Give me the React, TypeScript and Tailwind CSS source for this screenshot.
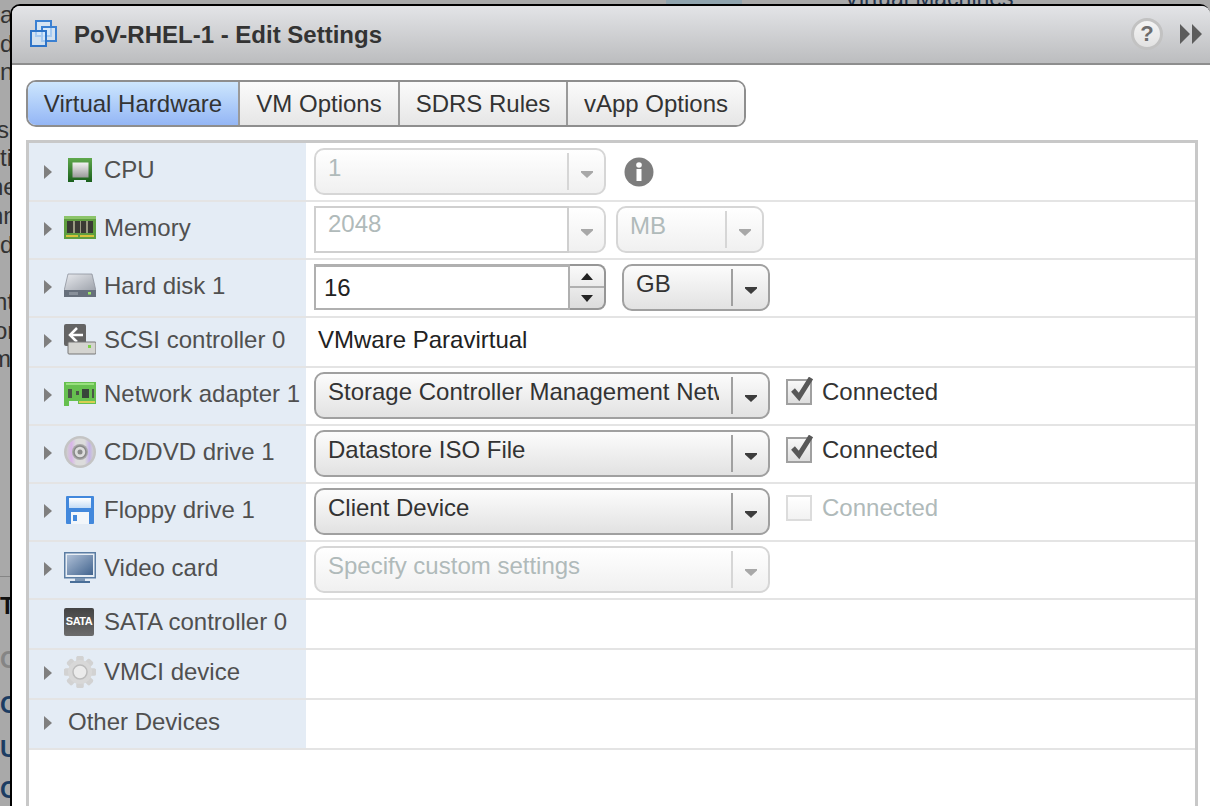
import { ReactNode } from 'react';

const font = { fontFamily: '"Liberation Sans", Arial, sans-serif' };

function Arrow({ disabled }: { disabled?: boolean }) {
  return (
    <svg width="12" height="7" viewBox="0 0 12 7" className="block">
      <path d="M0 0h12v1.5L6 7 0 1.5z" fill={disabled ? '#a8a8a8' : '#3c3c3c'} />
    </svg>
  );
}

function Combo({
  w,
  text,
  disabled,
  btn = 37,
  clip,
}: {
  w: string;
  text: string;
  disabled?: boolean;
  btn?: number;
  clip?: boolean;
}) {
  return (
    <div
      className={`${w} h-[47px] flex shrink-0 rounded-[10px] border-2 bg-gradient-to-b ${
        disabled
          ? 'border-[#d6d6d6] from-[#ffffff] to-[#f0f0f0] text-[#b0baba]'
          : 'border-[#a0a0a0] from-[#fcfcfc] to-[#e2e2e2] text-[#333333]'
      }`}
    >
      <div className="flex-1 min-w-0 pl-[12px] pb-[8px] flex items-center overflow-hidden whitespace-nowrap">
        <span className={clip ? 'block w-[391px] overflow-hidden' : ''}>{text}</span>
      </div>
      <div className="my-[3px] flex items-center justify-center pt-[6px] border-l-2 shrink-0 border-inherit" style={{ width: btn }}>
        <Arrow disabled={disabled} />
      </div>
    </div>
  );
}

function Check({ checked, disabled }: { checked?: boolean; disabled?: boolean }) {
  return (
    <div className="relative ml-4 mt-[6px] flex items-center gap-[10px]">
      <div
        className={`w-[26px] h-[26px] border-2 bg-gradient-to-b ${
          disabled ? 'border-[#dcdcdc] from-[#ffffff] to-[#f2f2f2]' : 'border-[#a0a0a0] from-[#f8f8f8] to-[#dedede]'
        }`}
      />
      {checked && (
        <svg width="28" height="28" viewBox="0 0 28 28" className="absolute left-[1px] -top-[1px]">
          <path d="M6 13l6 7L24 1" fill="none" stroke="#585858" strokeWidth="5" />
        </svg>
      )}
      <span className={disabled ? 'text-[#b0baba]' : 'text-[#333333]'}>Connected</span>
    </div>
  );
}

function CpuIcon() {
  return (
    <svg width="32" height="32" viewBox="0 0 32 32">
      <defs>
        <linearGradient id="cpuG" x1="0" y1="0" x2="0" y2="1">
          <stop offset="0" stopColor="#5fa84c" />
          <stop offset="1" stopColor="#1a5f1c" />
        </linearGradient>
        <linearGradient id="cpuC" x1="0" y1="0" x2="0" y2="1">
          <stop offset="0" stopColor="#f2f2f2" />
          <stop offset="1" stopColor="#9a9a9a" />
        </linearGradient>
      </defs>
      <path d="M4 4h24v24h-6v-2H10v2H4z" fill="url(#cpuG)" />
      <rect x="8.5" y="8.5" width="16" height="15" fill="url(#cpuC)" />
    </svg>
  );
}

function MemoryIcon() {
  return (
    <svg width="32" height="32" viewBox="0 0 32 32">
      <rect x="0" y="4" width="32" height="23" fill="#5f9e3f" />
      <rect x="0" y="4" width="32" height="3" fill="#8cc46a" />
      <rect x="3" y="9" width="26" height="12" fill="#3a3a34" />
      <path d="M9 9h2v12H9zM16 9h1v12h-1zM22 9h2v12h-2z" fill="#9a9a82" />
      <rect x="2" y="23" width="12" height="2" fill="#d8c23a" />
      <rect x="16" y="23" width="14" height="2" fill="#d8c23a" />
    </svg>
  );
}

function DiskIcon() {
  return (
    <svg width="32" height="32" viewBox="0 0 32 32">
      <defs>
        <linearGradient id="diskG" x1="0" y1="0" x2="1" y2="1">
          <stop offset="0" stopColor="#e8eaee" />
          <stop offset="1" stopColor="#9ca1aa" />
        </linearGradient>
      </defs>
      <path d="M4 4h24l4 17H0z" fill="url(#diskG)" stroke="#8a8f98" strokeWidth="0.75" />
      <rect x="0" y="20" width="32" height="7" fill="#67707c" />
      <rect x="5" y="22" width="9" height="3" fill="#88909a" />
      <rect x="24" y="22" width="3" height="2.5" fill="#9be36a" />
    </svg>
  );
}

function ScsiIcon() {
  return (
    <svg width="32" height="32" viewBox="0 0 32 32">
      <rect x="0" y="0" width="22" height="22" rx="2" fill="#646464" />
      <path d="M13 4l-7 7 7 7" fill="none" stroke="#ffffff" strokeWidth="2.5" />
      <path d="M8 11h11" stroke="#ffffff" strokeWidth="2.5" />
      <rect x="4" y="18" width="28" height="12" rx="1" fill="#d4d4d0" stroke="#777777" />
      <rect x="24" y="21" width="3" height="3" fill="#7ed04a" />
    </svg>
  );
}

function NetIcon() {
  return (
    <svg width="32" height="32" viewBox="0 0 32 32">
      <path d="M0 4h32v22H14v-3H5v5H0z" fill="#66c04f" />
      <rect x="2" y="5" width="28" height="2" fill="#98e07e" />
      <rect x="4" y="11" width="4" height="9" fill="#4a5747" />
      <rect x="12" y="13" width="3" height="4" fill="#4a5747" />
      <rect x="18" y="11" width="7" height="9" fill="#38453a" />
      <rect x="28" y="11" width="2" height="9" fill="#4a5747" />
      <rect x="15" y="23" width="16" height="2" fill="#d8cf52" />
    </svg>
  );
}

function DiscIcon() {
  return (
    <svg width="32" height="32" viewBox="0 0 32 32">
      <defs>
        <linearGradient id="discG" x1="0" y1="0" x2="1" y2="0">
          <stop offset="0" stopColor="#cfcfcf" />
          <stop offset="0.18" stopColor="#d8b4e8" />
          <stop offset="0.35" stopColor="#dcdcdc" />
          <stop offset="0.68" stopColor="#dcdcdc" />
          <stop offset="0.85" stopColor="#c4b4e8" />
          <stop offset="1" stopColor="#cfcfcf" />
        </linearGradient>
      </defs>
      <circle cx="16" cy="16" r="16" fill="#c4c4c4" />
      <circle cx="16" cy="16" r="13.5" fill="url(#discG)" />
      <circle cx="16" cy="16" r="8" fill="#a8a8a8" />
      <circle cx="16" cy="16" r="6" fill="#dcdcdc" stroke="#8a8a8a" strokeWidth="1.5" />
      <circle cx="16" cy="16" r="2.5" fill="#8a8a8a" />
    </svg>
  );
}

function FloppyIcon() {
  return (
    <svg width="32" height="32" viewBox="0 0 32 32">
      <defs>
        <linearGradient id="flopL" x1="0" y1="0" x2="0" y2="1">
          <stop offset="0" stopColor="#ffffff" />
          <stop offset="1" stopColor="#c4dcf6" />
        </linearGradient>
      </defs>
      <rect x="2" y="2" width="28" height="28" rx="1" fill="#4288dc" />
      <rect x="5" y="4" width="22" height="10" fill="url(#flopL)" />
      <rect x="7" y="18" width="18" height="12" fill="#f2f6fa" />
      <rect x="9" y="21" width="4" height="6" fill="#4288dc" />
    </svg>
  );
}

function MonitorIcon() {
  return (
    <svg width="32" height="32" viewBox="0 0 32 32">
      <defs>
        <linearGradient id="monG" x1="0" y1="0" x2="1" y2="1">
          <stop offset="0" stopColor="#aebfd6" />
          <stop offset="1" stopColor="#42648e" />
        </linearGradient>
      </defs>
      <rect x="0.75" y="0.75" width="30.5" height="25" fill="#e8eef4" stroke="#5b7da3" strokeWidth="1.5" />
      <rect x="3" y="3" width="26" height="20" fill="url(#monG)" />
      <rect x="11" y="26" width="10" height="3" fill="#7d97b5" />
      <rect x="6" y="29" width="20" height="2" fill="#4a6f98" />
    </svg>
  );
}

function SataIcon() {
  return (
    <div className="w-[30px] h-[28px] bg-gradient-to-b from-[#444444] to-[#6c6c6c] rounded-[2px] flex items-center justify-center text-white font-bold text-[11px] leading-none tracking-[-0.5px] mr-[2px]">
      SATA
    </div>
  );
}

function GearIcon() {
  const teeth = [0, 45, 90, 135, 180, 225, 270, 315];
  return (
    <svg width="32" height="32" viewBox="0 0 32 32">
      {teeth.map((a) => (
        <rect key={a} x="12.5" y="0" width="7" height="32" rx="1.5" fill="#d2d2d2" transform={`rotate(${a} 16 16)`} />
      ))}
      <circle cx="16" cy="16" r="12" fill="#d8d8d8" />
      <circle cx="16" cy="16" r="7" fill="#ebebeb" stroke="#bcbcbc" strokeWidth="1.5" />
    </svg>
  );
}

interface RowDef {
  label: string;
  icon?: ReactNode;
  h: string;
  expand?: boolean;
  first?: boolean;
  right?: ReactNode;
}

const rows: RowDef[] = [
  {
    label: 'CPU',
    icon: <CpuIcon />,
    h: 'h-[59px]',
    expand: true,
    first: true,
    right: (
      <>
        <Combo w="w-[292px]" text="1" disabled />
        <svg width="30" height="30" viewBox="0 0 30 30" className="ml-[18px] mt-[9px]">
          <circle cx="15" cy="15" r="14.5" fill="#7d7d7d" />
          <rect x="12.5" y="12" width="5" height="12" fill="#ffffff" />
          <circle cx="15" cy="8" r="2.8" fill="#ffffff" />
        </svg>
      </>
    ),
  },
  {
    label: 'Memory',
    icon: <MemoryIcon />,
    h: 'h-[58px]',
    expand: true,
    right: (
      <>
        <div className="w-[292px] h-[47px] flex shrink-0">
          <div className="flex-1 bg-white border-2 border-[#cfcfcf] pl-[12px] pb-[12px] text-[#b0baba] flex items-center">2048</div>
          <div className="w-[37px] flex items-center justify-center pt-[6px] border-2 border-l-0 border-[#d6d6d6] rounded-r-[10px] bg-gradient-to-b from-[#ffffff] to-[#f0f0f0]">
            <Arrow disabled />
          </div>
        </div>
        <div className="ml-[10px]">
          <Combo w="w-[148px]" text="MB" disabled />
        </div>
      </>
    ),
  },
  {
    label: 'Hard disk 1',
    icon: <DiskIcon />,
    h: 'h-[58px]',
    expand: true,
    right: (
      <>
        <div className="w-[292px] h-[46px] flex shrink-0">
          <div className="flex-1 bg-white border-2 border-t-[3px] border-[#b0b0b0] pl-[8px] pt-[1px] text-[#222222] flex items-center">16</div>
          <div className="w-[36px] flex flex-col border-2 border-l-0 border-[#969696] rounded-r-[8px] bg-gradient-to-b from-[#fafafa] to-[#dcdcdc]">
            <div className="flex-1 flex items-center justify-center border-b-2 border-[#b0b0b0]">
              <svg width="12" height="7" viewBox="0 0 12 7">
                <path d="M6 0l6 7H0z" fill="#222222" />
              </svg>
            </div>
            <div className="flex-1 flex items-center justify-center">
              <svg width="12" height="7" viewBox="0 0 12 7">
                <path d="M0 0h12L6 7z" fill="#222222" />
              </svg>
            </div>
          </div>
        </div>
        <div className="ml-[16px]">
          <Combo w="w-[148px]" text="GB" />
        </div>
      </>
    ),
  },
  {
    label: 'SCSI controller 0',
    icon: <ScsiIcon />,
    h: 'h-[50px]',
    expand: true,
    right: <span className="ml-1 mt-[4px] text-[#222222]">VMware Paravirtual</span>,
  },
  {
    label: 'Network adapter 1',
    icon: <NetIcon />,
    h: 'h-[58px]',
    expand: true,
    right: (
      <>
        <Combo w="w-[456px]" text="Storage Controller Management Network" clip />
        <Check checked />
      </>
    ),
  },
  {
    label: 'CD/DVD drive 1',
    icon: <DiscIcon />,
    h: 'h-[58px]',
    expand: true,
    right: (
      <>
        <Combo w="w-[456px]" text="Datastore ISO File" />
        <Check checked />
      </>
    ),
  },
  {
    label: 'Floppy drive 1',
    icon: <FloppyIcon />,
    h: 'h-[58px]',
    expand: true,
    right: (
      <>
        <Combo w="w-[456px]" text="Client Device" />
        <Check disabled />
      </>
    ),
  },
  {
    label: 'Video card',
    icon: <MonitorIcon />,
    h: 'h-[58px]',
    expand: true,
    right: <Combo w="w-[456px]" text="Specify custom settings" disabled />,
  },
  { label: 'SATA controller 0', icon: <SataIcon />, h: 'h-[50px]' },
  { label: 'VMCI device', icon: <GearIcon />, h: 'h-[50px]', expand: true },
  { label: 'Other Devices', h: 'h-[50px]', expand: true },
];

const tabs = ['Virtual Hardware', 'VM Options', 'SDRS Rules', 'vApp Options'];
const tabWidths = ['w-[210px]', 'w-[160px]', 'w-[168px]', 'w-[178px]'];

// bits of the page behind the dialog, only a 10px strip of it shows
const behind = [
  { t: 'a', c: '' },
  { t: 'd', c: '' },
  { t: 'n', c: '' },
  { t: '', c: '' },
  { t: 'se', c: '-ml-[3px]' },
  { t: 'ti', c: '' },
  { t: 'ne', c: '-ml-[10px]' },
  { t: 'hn', c: '-ml-[10px]' },
  { t: 'd', c: '' },
  { t: '', c: '' },
  { t: 'nt', c: '-ml-[6px]' },
  { t: 'or', c: '-ml-[6px]' },
  { t: 'm', c: '-ml-[9px]' },
];

function Backdrop() {
  return (
    <div className="absolute inset-0 overflow-hidden">
      <div className="absolute left-0 top-[1px] w-[10px] overflow-hidden text-[#333333] text-[24px] leading-[28.7px] whitespace-nowrap">
        {behind.map((l, i) => (
          <div key={i} className={`h-[28.7px] ${l.c}`}>
            {l.t}
          </div>
        ))}
      </div>
      <div className="absolute left-0 top-[576px] w-[10px] h-[1px] bg-[#858585]" />
      <div className="absolute left-0 top-[592px] w-[10px] overflow-hidden font-bold text-[24px] leading-7 text-[#111111]">T</div>
      <div className="absolute left-0 top-[646px] w-[10px] overflow-hidden font-bold text-[24px] leading-7 text-[#858585]">C</div>
      <div className="absolute left-0 top-[691px] w-[10px] overflow-hidden font-bold text-[24px] leading-7 text-[#1c3d63]">C</div>
      <div className="absolute left-0 top-[735px] w-[10px] overflow-hidden font-bold text-[24px] leading-7 text-[#1c3d63]">U</div>
      <div className="absolute left-0 top-[776px] w-[10px] overflow-hidden font-bold text-[24px] leading-7 text-[#1c3d63]">C</div>
      <div className="absolute left-[666px] top-0 w-[76px] h-[4px] bg-[#8fa3ad]" />
      <div className="absolute left-[844px] -top-[14px] text-[#22344e] text-[23px] leading-6 whitespace-nowrap">Virtual Machines</div>
    </div>
  );
}

export default function App() {
  return (
    <div className="relative w-[1210px] h-[806px] overflow-hidden bg-[#a9a9a9] text-[24px] leading-7" style={font}>
      <Backdrop />
      <div className="relative ml-[10px] mt-[4px] h-[802px] flex flex-col bg-white border-l-2 border-t-2 border-black rounded-tl-[10px] rounded-tr-[10px]">
        <div className="h-[59px] shrink-0 flex items-center pl-[18px] pr-[8px] rounded-t-[8px] border-b-2 border-[#8e8e8e] bg-gradient-to-b from-[#e3e4e7] to-[#bcbdbf]">
          <svg width="28" height="28" viewBox="0 0 28 28" className="shrink-0 -mt-[2px]">
            <rect x="6" y="1" width="15" height="15" fill="#d6eafc" fillOpacity="0.7" stroke="#3a80d2" strokeWidth="2" />
            <rect x="12" y="7" width="14" height="14" fill="#d6eafc" fillOpacity="0.7" stroke="#3a80d2" strokeWidth="2" />
            <rect x="1" y="11" width="15" height="15" fill="#d6eafc" fillOpacity="0.7" stroke="#2e74c8" strokeWidth="2" />
          </svg>
          <h1 className="ml-[16px] flex-1 font-bold text-[#333333]">PoV-RHEL-1 - Edit Settings</h1>
          <div className="-mt-[2px] w-[32px] h-[32px] rounded-full bg-gradient-to-b from-[#f4f4f4] to-[#e2e2e2] border-[3px] border-[#c2c2c2] flex items-center justify-center font-bold text-[#6c6c6c] text-[22px]">
            ?
          </div>
          <svg width="22" height="20" viewBox="0 0 22 20" className="ml-[17px] -mt-[1px]">
            <path d="M0 0l10 10L0 20zM12 0l10 10-10 10z" fill="#5c5c5c" />
          </svg>
        </div>

        <div className="flex-1 pl-[14px] pt-[15px] pr-[12px] min-h-0">
          <div className="flex w-fit h-[47px] rounded-[10px] border-2 border-[#8e8e8e] overflow-hidden">
            {tabs.map((t, i) => (
              <div
                key={t}
                className={`${tabWidths[i]} flex items-center justify-center bg-gradient-to-b ${
                  i === 0 ? 'from-[#cde6fd] to-[#94b6f5]' : 'border-l-2 border-[#9a9a9a] from-[#fbfbfb] to-[#e6e6e6]'
                } text-[#333333]`}
              >
                {t}
              </div>
            ))}
          </div>

          <div className="mt-[13px] border-[3px] border-b-0 border-[#c8c8c8] h-[700px]">
            {rows.map((r) => (
              <div key={r.label} className={`${r.h} flex border-b-2 border-[#e4e4e4] box-border`}>
                <div
                  className={`w-[277px] shrink-0 bg-[#e4ecf5] flex items-center pl-[15px] text-[#505050] whitespace-nowrap ${
                    r.first ? 'pb-[3px]' : 'pb-[5px]'
                  }`}
                >
                  <div className="w-[20px] shrink-0">
                    {r.expand && (
                      <svg width="8" height="14" viewBox="0 0 8 14" className="block mt-[3px]">
                        <path d="M0 0l8 7-8 7z" fill="#7f7f7f" />
                      </svg>
                    )}
                  </div>
                  {r.icon ? (
                    <div className="w-[32px] h-[32px] shrink-0 flex items-center justify-start">{r.icon}</div>
                  ) : null}
                  <span className={r.icon ? 'ml-[8px]' : 'ml-[4px]'}>{r.label}</span>
                </div>
                <div className={`flex-1 flex items-start pl-[8px] ${r.first ? 'pt-[5px]' : 'pt-[4px]'}`}>{r.right}</div>
              </div>
            ))}
          </div>
        </div>
      </div>
    </div>
  );
}
